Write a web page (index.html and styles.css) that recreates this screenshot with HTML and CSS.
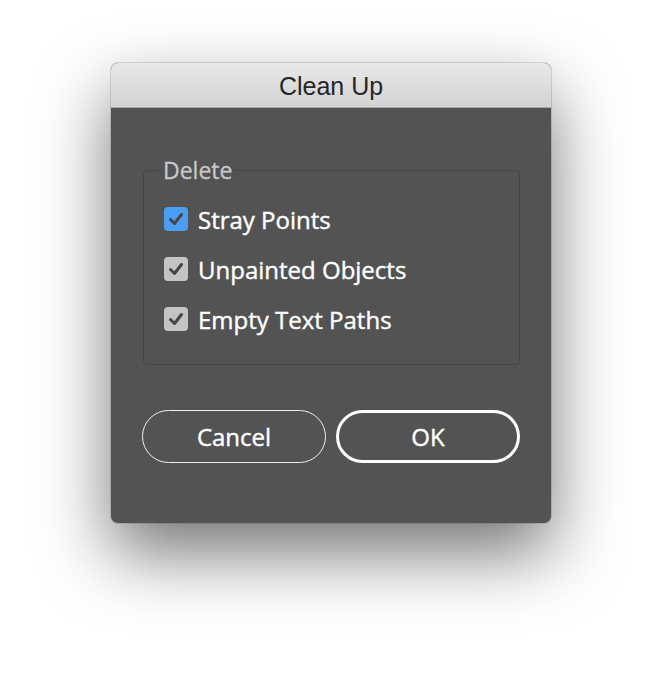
FILE: index.html
```html
<!DOCTYPE html>
<html lang="en">
<head>
  <meta charset="UTF-8" />
  <title>Clean Up</title>
  <link rel="stylesheet" href="styles.css">
</head>
<body>
  <div class="dialog">
    <div class="titlebar">Clean Up</div>
    <div class="content">
      <fieldset class="group">
        <legend>Delete</legend>
        <label class="row">
          <span class="box box-focus">
            <svg viewBox="0 0 24 24" width="24" height="24"><path d="M6.5 12.5 L10.5 16.5 L17.5 7.5" fill="none" stroke="#464646" stroke-width="3" stroke-linecap="round" stroke-linejoin="round"/></svg>
          </span>
          Stray Points
        </label>
        <label class="row">
          <span class="box">
            <svg viewBox="0 0 24 24" width="24" height="24"><path d="M6.5 12.5 L10.5 16.5 L17.5 7.5" fill="none" stroke="#464646" stroke-width="3" stroke-linecap="round" stroke-linejoin="round"/></svg>
          </span>
          Unpainted Objects
        </label>
        <label class="row">
          <span class="box">
            <svg viewBox="0 0 24 24" width="24" height="24"><path d="M6.5 12.5 L10.5 16.5 L17.5 7.5" fill="none" stroke="#464646" stroke-width="3" stroke-linecap="round" stroke-linejoin="round"/></svg>
          </span>
          Empty Text Paths
        </label>
      </fieldset>
      <div class="buttons">
        <button class="btn">Cancel</button>
        <button class="btn btn-default">OK</button>
      </div>
    </div>
  </div>
</body>
</html>
```

FILE: styles.css
```css
html, body {
  height: 100%;
}
body {
  margin: 0;
  padding-top: 63px;
  box-sizing: border-box;
  background: #fff;
  font-family: 'Open Sans', sans-serif;
}
.dialog {
  width: 440px;
  margin: 0 auto;
  border-radius: 7px;
  background: #535353;
  box-shadow: 0 0 0 1px rgba(0,0,0,0.12), 0 30px 70px rgba(0,0,0,0.55);
  overflow: hidden;
}
.titlebar {
  height: 44px;
  line-height: 47px;
  text-align: center;
  font-family: 'Liberation Sans', sans-serif;
  font-size: 25px;
  color: #262626;
  background: linear-gradient(#e8e8e8, #d3d3d3);
  border-bottom: 1px solid #a8a8a8;
}
.content {
  padding: 52px 31px 60px 32px;
}
.group {
  margin: 0;
  padding: 14px 0 20px 20px;
  border: 1px solid #474747;
  border-radius: 4px;
}
.group legend {
  padding: 0 1px;
  margin-left: -2px;
  color: #c8c8c8;
  font-size: 23px;
  line-height: 20px;
  -webkit-text-stroke: 0.3px #c8c8c8;
}
.row {
  display: flex;
  align-items: center;
  gap: 10px;
  height: 50px;
  color: #fff;
  font-size: 24px;
  -webkit-text-stroke: 0.4px #fff;
}
.box {
  width: 24px;
  height: 24px;
  border-radius: 4px;
  background: #c4c4c4;
  display: block;
}
.box svg {
  display: block;
}
.box-focus {
  background: #4b9ef1;
}
.buttons {
  display: grid;
  grid-template-columns: 1fr 1fr;
  gap: 10px;
  margin-top: 45px;
  margin-left: -1px;
}
.btn {
  height: 53px;
  padding: 0;
  border: 1.5px solid #f0f0f0;
  border-radius: 27px;
  background: transparent;
  color: #fff;
  font-family: 'Open Sans', sans-serif;
  font-size: 24px;
  -webkit-text-stroke: 0.4px #fff;
}
.btn-default {
  border: 3px solid #fff;
}
```
